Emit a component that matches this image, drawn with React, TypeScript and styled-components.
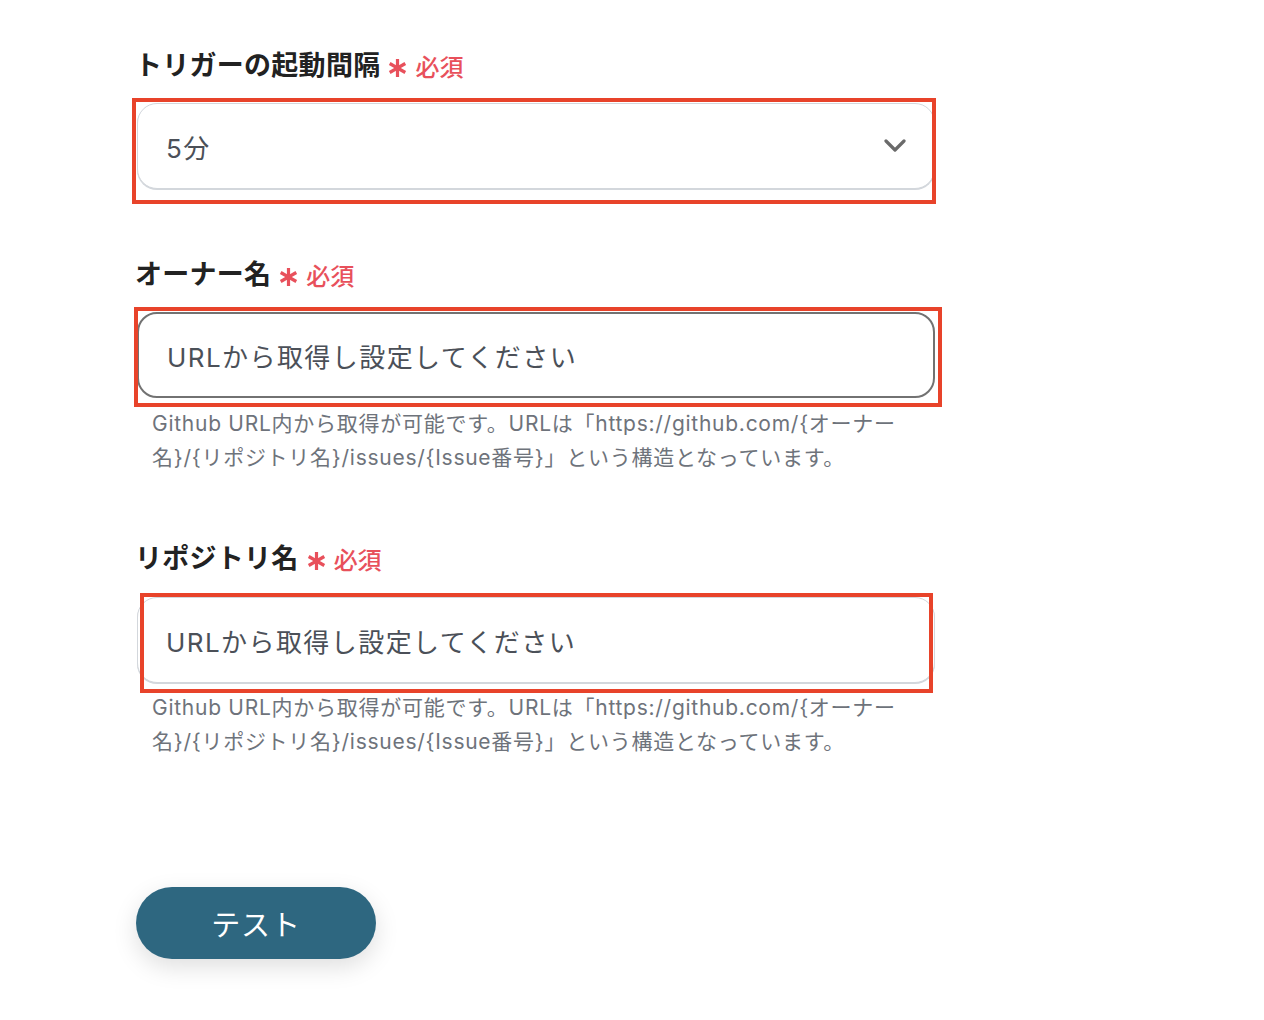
import React from "react";
import styled, { createGlobalStyle } from "styled-components";

const Global = createGlobalStyle`
  html, body { margin: 0; padding: 0; background: #ffffff; }
  body { font-family: Inter, "Noto Sans CJK JP", sans-serif; }
`;

const Page = styled.div`
  width: 1264px;
  min-height: 1020px;
  box-sizing: border-box;
  padding: 44px 0 0 137px;
  display: flex;
  flex-direction: column;
`;

const Field = styled.section<{ $gapAfter: number }>`
  width: 798px;
  display: flex;
  flex-direction: column;
  margin-bottom: ${(p) => p.$gapAfter}px;
`;

const Label = styled.div`
  display: flex;
  align-items: center;
  height: 40px;
  line-height: 40px;
  margin-left: -2px;
`;

const LabelText = styled.span`
  font-family: "Noto Sans CJK JP", sans-serif;
  font-size: 27px;
  font-weight: 700;
  color: #222222;
  letter-spacing: 0.01em;
`;

const Required = styled.span`
  display: inline-flex;
  align-items: center;
  margin-left: 8px;
  color: #e8505b;
  font-family: "Noto Sans CJK JP", sans-serif;
  font-size: 24px;
  font-weight: 500;
  position: relative;
  top: 2px;
`;

const StarIcon = styled.svg`
  margin-right: 8px;
  position: relative;
  top: 2px;
`;

const BoxWrap = styled.div<{ $mt: number }>`
  position: relative;
  margin-top: ${(p) => p.$mt}px;
`;

const Box = styled.div<{ $focused?: boolean }>`
  height: 86px;
  box-sizing: border-box;
  border-radius: 20px;
  border: ${(p) => (p.$focused ? "2px solid #727272" : "1.5px solid #d3d7dc")};
  box-shadow: ${(p) => (p.$focused ? "none" : "0 1px 0 #d3d7dc")};
  background: #ffffff;
  display: flex;
  align-items: center;
  justify-content: space-between;
  padding: 0 28px 0 28px;
  font-family: Inter, "Noto Sans CJK JP", sans-serif;
  font-size: 26px;
  color: #4b5058;
  letter-spacing: 0.055em;
`;

const Highlight = styled.div<{ $l: number; $t: number; $r: number; $b: number }>`
  position: absolute;
  left: ${(p) => p.$l}px;
  top: ${(p) => p.$t}px;
  right: ${(p) => p.$r}px;
  bottom: ${(p) => p.$b}px;
  border: 4.5px solid #e8432a;
  pointer-events: none;
`;

const Help = styled.p<{ $mt: number }>`
  margin: ${(p) => p.$mt}px 0 0 0;
  padding: 0 14px 0 15px;
  font-family: Inter, "Noto Sans CJK JP", sans-serif;
  font-size: 21px;
  line-height: 34px;
  color: #6e737b;
  letter-spacing: 0.035em;
`;

const TestButton = styled.button`
  width: 240px;
  height: 72px;
  margin-left: -1px;
  border: none;
  border-radius: 36px;
  background: #2e6780;
  color: #ffffff;
  font-family: "Noto Sans CJK JP", sans-serif;
  font-size: 29px;
  font-weight: 400;
  letter-spacing: 0.03em;
  box-shadow: 0 8px 24px rgba(0, 0, 0, 0.13);
  cursor: pointer;
`;

const Chevron = () => (
  <svg width="22" height="14" viewBox="0 0 22 14" fill="none">
    <polyline
      points="2,2 11,11 20,2"
      stroke="#6a6a6a"
      strokeWidth="3.2"
      strokeLinecap="round"
      strokeLinejoin="round"
    />
  </svg>
);

const Star = () => (
  <StarIcon width="19" height="20" viewBox="0 0 19 20" fill="none">
    <g stroke="#e8505b" strokeWidth="3.2" strokeLinecap="butt">
      <line x1="9.5" y1="1" x2="9.5" y2="19" />
      <line x1="1.7" y1="5.5" x2="17.3" y2="14.5" />
      <line x1="1.7" y1="14.5" x2="17.3" y2="5.5" />
    </g>
  </StarIcon>
);

const helpText =
  "Github URL内から取得が可能です。URLは「https://github.com/{オーナー名}/{リポジトリ名}/issues/{Issue番号}」という構造となっています。";

export default function App() {
  return (
    <>
      <Global />
      <Page>
        <Field $gapAfter={64}>
          <Label>
            <LabelText>トリガーの起動間隔</LabelText>
            <Required>
              <Star />
              必須
            </Required>
          </Label>
          <BoxWrap $mt={19}>
            <Box>
              <span>5分</span>
              <Chevron />
            </Box>
            <Highlight $l={-5} $t={-5} $r={-1} $b={-15} />
          </BoxWrap>
        </Field>

        <Field $gapAfter={62}>
          <Label>
            <LabelText>オーナー名</LabelText>
            <Required>
              <Star />
              必須
            </Required>
          </Label>
          <BoxWrap $mt={19}>
            <Box $focused>
              <span>URLから取得し設定してください</span>
            </Box>
            <Highlight $l={-3} $t={-5} $r={-7} $b={-9} />
          </BoxWrap>
          <Help $mt={9}>{helpText}</Help>
        </Field>

        <Field $gapAfter={128}>
          <Label>
            <LabelText>リポジトリ名</LabelText>
            <Required>
              <Star />
              必須
            </Required>
          </Label>
          <BoxWrap $mt={20}>
            <Box>
              <span>URLから取得し設定してください</span>
            </Box>
            <Highlight $l={3} $t={-4} $r={2} $b={-10} />
          </BoxWrap>
          <Help $mt={8}>{helpText}</Help>
        </Field>

        <div>
          <TestButton>テスト</TestButton>
        </div>
      </Page>
    </>
  );
}
